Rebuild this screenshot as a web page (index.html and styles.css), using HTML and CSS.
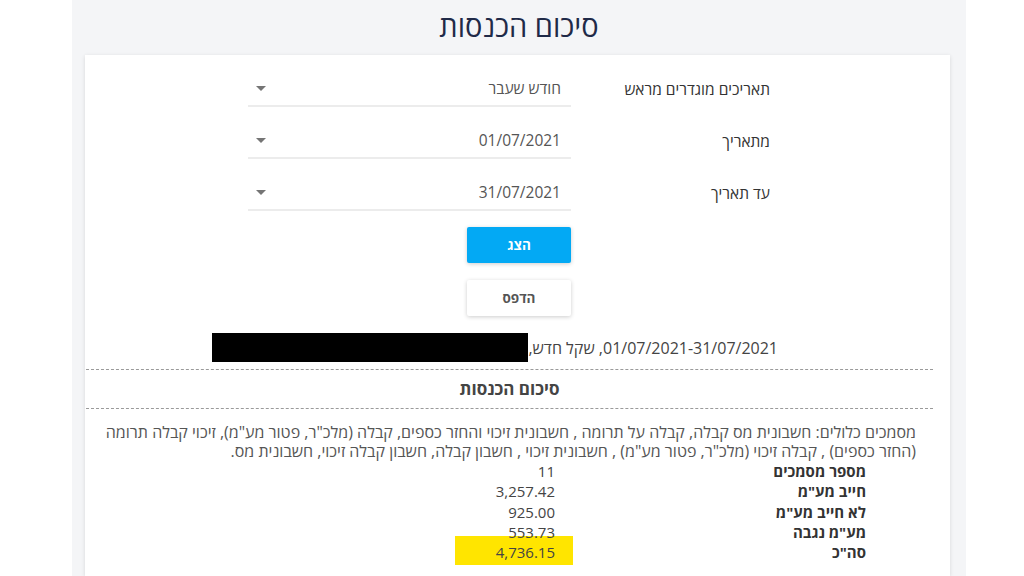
FILE: index.html
```html
<!DOCTYPE html>
<html lang="he" dir="rtl">

<head>
    <meta charset="UTF-8">
    <meta name="viewport" content="width=device-width, initial-scale=1.0">
    <title>סיכום הכנסות</title>
    <link rel="stylesheet" href="styles.css">
</head>

<body>
    <div class="page">
        <h1 class="title">סיכום הכנסות</h1>

        <div class="card">
            <!-- טופס בחירת תאריכים -->
            <div class="form-row">
                <label class="form-label">תאריכים מוגדרים מראש</label>
                <div class="select">
                    <span class="select-value">חודש שעבר</span>
                    <span class="select-arrow"></span>
                </div>
            </div>
            <div class="form-row">
                <label class="form-label">מתאריך</label>
                <div class="select">
                    <span class="select-value">01/07/2021</span>
                    <span class="select-arrow"></span>
                </div>
            </div>
            <div class="form-row">
                <label class="form-label">עד תאריך</label>
                <div class="select">
                    <span class="select-value">31/07/2021</span>
                    <span class="select-arrow"></span>
                </div>
            </div>

            <div class="form-row btn-row">
                <span class="form-label"></span>
                <div class="btn-cell">
                    <button class="btn btn-primary">הצג</button>
                </div>
            </div>
            <div class="form-row btn-row">
                <span class="form-label"></span>
                <div class="btn-cell">
                    <button class="btn btn-light">הדפס</button>
                </div>
            </div>

            <!-- דוח -->
            <div class="report-meta">
                <span>01/07/2021-31/07/2021, שקל חדש,</span><span class="redacted"></span>
            </div>

            <div class="report">
                <div class="report-title">סיכום הכנסות</div>
                <p class="report-desc">מסמכים כלולים: חשבונית מס קבלה, קבלה על תרומה , חשבונית זיכוי והחזר כספים, קבלה (מלכ"ר, פטור מע"מ), זיכוי קבלה תרומה (החזר כספים) , קבלה זיכוי (מלכ"ר, פטור מע"מ) , חשבונית זיכוי , חשבון קבלה, חשבון קבלה זיכוי, חשבונית מס.</p>
                <table class="summary">
                    <tr>
                        <td class="summary-label">מספר מסמכים</td>
                        <td class="summary-value">11</td>
                    </tr>
                    <tr>
                        <td class="summary-label">חייב מע"מ</td>
                        <td class="summary-value">3,257.42</td>
                    </tr>
                    <tr>
                        <td class="summary-label">לא חייב מע"מ</td>
                        <td class="summary-value">925.00</td>
                    </tr>
                    <tr>
                        <td class="summary-label">מע"מ נגבה</td>
                        <td class="summary-value">553.73</td>
                    </tr>
                    <tr>
                        <td class="summary-label">סה"כ</td>
                        <td class="summary-value total">4,736.15</td>
                    </tr>
                </table>
            </div>
        </div>
    </div>
</body>

</html>
```

FILE: styles.css
```css
* {
    padding: 0;
    margin: 0;
    box-sizing: border-box;
}

html,
body {
    height: 100%;
    background: #fff;
}

body {
    font-family: "Open Sans", "Liberation Sans", sans-serif;
    color: #444;
    overflow: hidden;
}

/* מסגרת אפורה */
.page {
    margin: 0 58px 0 72px;
    height: 100%;
    background: #f4f5f7;
}

.title {
    height: 55px;
    line-height: 52px;
    text-align: center;
    font-size: 29px;
    font-weight: 400;
    color: #1f2a48;
}

/* כרטיס */
.card {
    margin: 0 16px 0 13px;
    height: 521px;
    padding: 16px 17px 0 1px;
    background: #fff;
    box-shadow: 0 1px 4px rgba(0, 0, 0, .12);
}

/* שורות טופס */
.form-row {
    display: flex;
    align-items: center;
    margin-bottom: 16px;
    padding-right: 163px;
}

.form-label {
    width: 199px;
    font-size: 15.5px;
    color: #333;
}

.select {
    width: 323px;
    height: 36px;
    display: flex;
    align-items: center;
    justify-content: space-between;
    padding: 0 10px 0 8px;
    border-bottom: 2px solid #ececec;
    font-size: 15.5px;
    color: #555;
}

.select-arrow {
    width: 0;
    height: 0;
    border-left: 5px solid transparent;
    border-right: 5px solid transparent;
    border-top: 5px solid #757575;
}

/* כפתורים */
.btn-row {
    margin-bottom: 17px;
}

.btn-row:first-of-type {
    margin-top: 17px;
}

.btn-cell {
    width: 323px;
}

.btn {
    width: 104px;
    height: 36px;
    border: none;
    border-radius: 2px;
    font-family: inherit;
    font-size: 13.5px;
    font-weight: 700;
    box-shadow: 0 1px 4px rgba(0, 0, 0, .2);
}

.btn-primary {
    background: #03a9f4;
    color: #fff;
}

.btn-light {
    background: #fff;
    color: #555;
}

/* כותרת הדוח */
.report-meta {
    display: flex;
    align-items: center;
    padding-right: 155px;
    margin-top: 3px;
    height: 29px;
    font-size: 16px;
    color: #444;
}

.redacted {
    display: inline-block;
    width: 316px;
    height: 29px;
    background: #000;
}

.report {
    margin-top: 7px;
}

.report-title {
    height: 40px;
    line-height: 38px;
    border-top: 1px dashed #9a9a9a;
    border-bottom: 1px dashed #9a9a9a;
    text-align: center;
    font-size: 17px;
    font-weight: 700;
    color: #444;
}

.report-desc {
    padding: 14px 17px 0;
    font-size: 16px;
    line-height: 19px;
    color: #555;
}

/* טבלת סיכום */
.summary {
    position: relative;
    z-index: 0;
    margin-right: 67px;
    border-collapse: collapse;
    font-size: 15px;
}

.summary td {
    padding: 0;
    height: 20.3px;
    line-height: 20px;
}

.summary-label {
    width: 293px;
    font-weight: 700;
    color: #333;
}

.summary-value {
    width: 118px;
    padding-right: 18px !important;
    color: #444;
    direction: ltr;
    text-align: right;
}

.total {
    position: relative;
}

/* סימון צהוב */
.total::before {
    content: "";
    position: absolute;
    left: 0;
    right: 0;
    top: -6px;
    bottom: -3px;
    background: #ffe500;
    z-index: -1;
}
```
